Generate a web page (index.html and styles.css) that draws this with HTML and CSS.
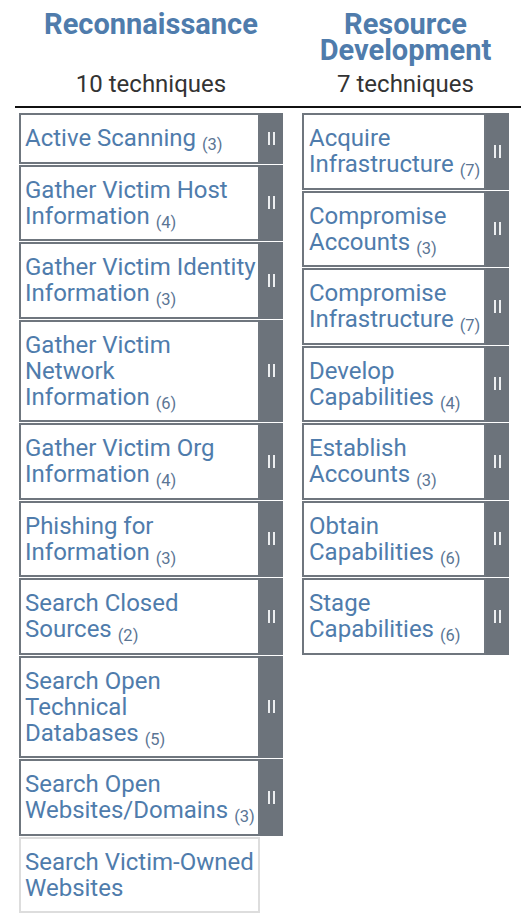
FILE: index.html
```html
<!DOCTYPE html>
<html lang="en">
<head>
<meta charset="utf-8">
<title>Matrix</title>
<link rel="stylesheet" href="styles.css">
</head>
<body>
<div class="matrix">
  <section class="tactic tactic-recon">
    <header class="tactic-head">
      <div class="tactic-name">Reconnaissance</div>
      <div class="tactic-count">10 techniques</div>
    </header>
    <div class="techniques">
      <div class="technique"><div class="tech-cell">Active Scanning&nbsp;<span class="count">(3)</span></div><div class="sidebar"><i></i><i></i></div></div>
      <div class="technique"><div class="tech-cell">Gather Victim Host Information&nbsp;<span class="count">(4)</span></div><div class="sidebar"><i></i><i></i></div></div>
      <div class="technique"><div class="tech-cell">Gather Victim Identity Information&nbsp;<span class="count">(3)</span></div><div class="sidebar"><i></i><i></i></div></div>
      <div class="technique"><div class="tech-cell">Gather Victim Network Information&nbsp;<span class="count">(6)</span></div><div class="sidebar"><i></i><i></i></div></div>
      <div class="technique"><div class="tech-cell">Gather Victim Org Information&nbsp;<span class="count">(4)</span></div><div class="sidebar"><i></i><i></i></div></div>
      <div class="technique"><div class="tech-cell">Phishing for Information&nbsp;<span class="count">(3)</span></div><div class="sidebar"><i></i><i></i></div></div>
      <div class="technique"><div class="tech-cell">Search Closed Sources&nbsp;<span class="count">(2)</span></div><div class="sidebar"><i></i><i></i></div></div>
      <div class="technique"><div class="tech-cell">Search Open Technical Databases&nbsp;<span class="count">(5)</span></div><div class="sidebar"><i></i><i></i></div></div>
      <div class="technique"><div class="tech-cell">Search Open Websites/Domains&nbsp;<span class="count">(3)</span></div><div class="sidebar"><i></i><i></i></div></div>
      <div class="technique plain"><div class="tech-cell">Search Victim-Owned Websites</div></div>
    </div>
  </section>
  <section class="tactic tactic-resource">
    <header class="tactic-head">
      <div class="tactic-name">Resource Development</div>
      <div class="tactic-count">7 techniques</div>
    </header>
    <div class="techniques">
      <div class="technique"><div class="tech-cell">Acquire Infrastructure&nbsp;<span class="count">(7)</span></div><div class="sidebar"><i></i><i></i></div></div>
      <div class="technique"><div class="tech-cell">Compromise Accounts&nbsp;<span class="count">(3)</span></div><div class="sidebar"><i></i><i></i></div></div>
      <div class="technique"><div class="tech-cell">Compromise Infrastructure&nbsp;<span class="count">(7)</span></div><div class="sidebar"><i></i><i></i></div></div>
      <div class="technique"><div class="tech-cell">Develop Capabilities&nbsp;<span class="count">(4)</span></div><div class="sidebar"><i></i><i></i></div></div>
      <div class="technique"><div class="tech-cell">Establish Accounts&nbsp;<span class="count">(3)</span></div><div class="sidebar"><i></i><i></i></div></div>
      <div class="technique"><div class="tech-cell">Obtain Capabilities&nbsp;<span class="count">(6)</span></div><div class="sidebar"><i></i><i></i></div></div>
      <div class="technique"><div class="tech-cell">Stage Capabilities&nbsp;<span class="count">(6)</span></div><div class="sidebar"><i></i><i></i></div></div>
    </div>
  </section>
</div>
</body>
</html>
```
FILE: styles.css
```css
html, body {
  margin: 0;
  padding: 0;
  background: #ffffff;
  overflow: hidden;
}

body {
  font-family: Roboto, "Noto Sans", "Liberation Sans", sans-serif;
}

.matrix {
  display: flex;
  align-items: flex-start;
  padding-left: 15px;
}

.tactic {
  display: flex;
  flex-direction: column;
  box-sizing: border-box;
}

.tactic-recon {
  width: 277px;
}

.tactic-resource {
  width: 229px;
}

.tactic-head {
  border-bottom: 2px solid #111111;
  padding-top: 11px;
  padding-bottom: 7px;
  text-align: center;
}

.tactic-recon .tactic-head,
.tactic-recon .techniques {
  padding-left: 4px;
  padding-right: 9px;
}

.tactic-resource .tactic-head,
.tactic-resource .techniques {
  padding-left: 10px;
  padding-right: 12px;
}

.tactic-name {
  height: 52px;
  font-size: 29px;
  line-height: 26px;
  font-weight: 700;
  color: #4f7cac;
}

.tactic-count {
  margin-top: 6px;
  font-size: 24px;
  line-height: 30px;
  color: #333333;
}

.techniques {
  display: flex;
  flex-direction: column;
  gap: 1px;
  padding-top: 5px;
}

.technique {
  display: flex;
}

.tech-cell {
  flex: 1;
  min-width: 0;
  border: 2px solid #6f767e;
  padding: 10px 0 10.5px 4px;
  font-size: 24px;
  line-height: 26px;
  color: #4f7cac;
}

.tactic-resource .tech-cell {
  padding-left: 5px;
}

.technique.plain {
  padding-right: 23px;
}

.technique.plain .tech-cell {
  border-color: #dddddd;
}

.count {
  font-size: 16.5px;
  line-height: 0;
  vertical-align: -4px;
  color: #5b7594;
}

.sidebar {
  flex: none;
  width: 23px;
  background: #6c737b;
  display: flex;
  align-items: center;
  justify-content: center;
  gap: 3px;
}

.sidebar i {
  display: block;
  width: 2px;
  height: 13px;
  background: #eceef0;
}
```
